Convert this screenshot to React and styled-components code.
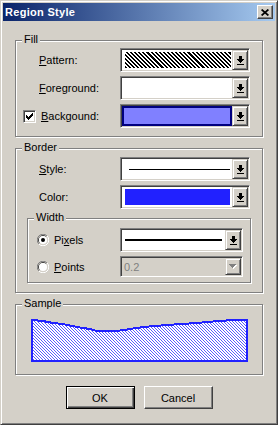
import React from 'react'
import styled, { createGlobalStyle } from 'styled-components'

const FACE = '#d4d0c8'

export const App = () => (
  <>
    <GlobalStyle />
    <Window>
      <TitleBar>
        <Title>Region Style</Title>
        <CloseButton aria-label="Close">
          <svg width="8" height="7" viewBox="0 0 8 7">
            <path d="M0.6 0.5 L7.4 6.5 M7.4 0.5 L0.6 6.5" stroke="#000" strokeWidth="1.7" />
          </svg>
        </CloseButton>
      </TitleBar>

      <Body>
        <Group $pad="7px 0 8px">
          <Caption>Fill</Caption>
          <Stack>
            <Row $col={104}>
              <Label $indent={23}><span><Key>P</Key>attern:</span></Label>
              <Combo $w={130}>
                <Preview $pad="2px 1px 2px 3px"><Hatch /></Preview>
                <DropButton><DropArrow /></DropButton>
              </Combo>
            </Row>
            <Row $col={104}>
              <Label $indent={23}><span><Key>F</Key>oreground:</span></Label>
              <Combo $w={130}>
                <Preview />
                <DropButton><DropArrow /></DropButton>
              </Combo>
            </Row>
            <Row $col={104}>
              <Label $indent={7}>
                <Checkbox checked />
                <span><Key>B</Key>ackgound:</span>
              </Label>
              <Combo $w={130}>
                <Preview><Swatch $color="#8080ff" $focus /></Preview>
                <DropButton><DropArrow /></DropButton>
              </Combo>
            </Row>
          </Stack>
        </Group>

        <Group $pad="8px 0 9px" $gap={11}>
          <Caption>Border</Caption>
          <Stack>
            <Row $col={104}>
              <Label $indent={23}><span><Key>S</Key>tyle:</span></Label>
              <Combo $w={130}>
                <Preview $pad="0 2px 0 7px"><Line $weight={1} /></Preview>
                <DropButton><DropArrow /></DropButton>
              </Combo>
            </Row>
            <Row $col={104}>
              <Label $indent={23}><span>Color:</span></Label>
              <Combo $w={130}>
                <Preview $pad="2px 2px 2px 3px"><Swatch $color="#2121ff" /></Preview>
                <DropButton><DropArrow /></DropButton>
              </Combo>
            </Row>
          </Stack>

          <Group $pad="9px 0 5px" $gap={9} $inset={11}>
            <Caption>Width</Caption>
            <Stack>
              <Row $col={92}>
                <Label $indent={9}>
                  <Radio checked />
                  <span>Pi<Key>x</Key>els</span>
                </Label>
                <Combo $w={123}>
                  <Preview $pad="0 3px 0 3px"><Line $weight={2} /></Preview>
                  <DropButton><DropArrow /></DropButton>
                </Combo>
              </Row>
              <Row $col={92}>
                <Label $indent={9}>
                  <Radio />
                  <span><Key>P</Key>oints</span>
                </Label>
                <Combo $w={123} $h={21} $disabled>
                  <Preview $pad="0 0 0 2px"><DisabledText>0.2</DisabledText></Preview>
                  <DropButton><DisabledArrow /></DropButton>
                </Combo>
              </Row>
            </Stack>
          </Group>
        </Group>

        <Group $pad="13px 0 11px" $gap={11}>
          <Caption>Sample</Caption>
          <SampleArea>
            <Sample />
          </SampleArea>
        </Group>

        <Buttons>
          <PushButton $default>OK</PushButton>
          <PushButton>Cancel</PushButton>
        </Buttons>
      </Body>
    </Window>
  </>
)

export default App


const DropArrow = () => (
  <svg width="7" height="9" viewBox="0 0 7 9" shapeRendering="crispEdges">
    <rect x="2" y="0" width="3" height="3" fill="#000" />
    <rect x="0" y="3" width="7" height="1" fill="#000" />
    <rect x="1" y="4" width="5" height="1" fill="#000" />
    <rect x="2" y="5" width="3" height="1" fill="#000" />
    <rect x="3" y="6" width="1" height="1" fill="#000" />
    <rect x="0" y="8" width="7" height="1" fill="#000" />
  </svg>
)

const DisabledArrow = () => (
  <svg width="8" height="5" viewBox="0 0 8 5" shapeRendering="crispEdges">
    <path d="M1 1 H8 V2 H7 V3 H6 V4 H5 V5 H4 V4 H3 V3 H2 V2 H1 Z" fill="#fff" />
    <path d="M0 0 H7 V1 H6 V2 H5 V3 H4 V4 H3 V3 H2 V2 H1 V1 H0 Z" fill="#808080" />
  </svg>
)

const Checkbox = ({ checked }) => (
  <CheckBox>
    {checked && (
      <svg width="9" height="9" viewBox="0 0 9 9" shapeRendering="crispEdges">
        <path d="M1 3 H2 V4 H3 V5 H4 V4 H5 V3 H6 V2 H7 V1 H8 V4 H7 V5 H6 V6 H5 V7 H4 V8 H3 V7 H2 V6 H1 Z" fill="#000" />
      </svg>
    )}
  </CheckBox>
)

const Radio = ({ checked }) => (
  <svg width="12" height="12" viewBox="0 0 12 12">
    <path d="M1.9 10.1 A5.5 5.5 0 0 1 10.1 1.9" fill="none" stroke="#808080" />
    <path d="M10.1 1.9 A5.5 5.5 0 0 1 1.9 10.1" fill="none" stroke="#fff" />
    <path d="M2.8 9.2 A4.5 4.5 0 0 1 9.2 2.8" fill="none" stroke="#404040" />
    <path d="M9.2 2.8 A4.5 4.5 0 0 1 2.8 9.2" fill="none" stroke={FACE} />
    <circle cx="6" cy="6" r="4" fill="#fff" />
    {checked && <circle cx="6" cy="6" r="2" fill="#000" />}
  </svg>
)

// top edge of the sample polygon (local coords, y = top pixel row)
const SAMPLE_TOP = [
  [0, 1], [12, 2], [22, 4], [32, 5], [41, 7], [52, 9], [59, 10], [66, 12],
  [86, 12], [99, 10], [112, 8], [136, 6], [151, 5], [166, 4], [176, 3], [202, 1], [216, 1],
]

const Sample = () => {
  const w = 217
  const h = 45
  const top = SAMPLE_TOP.map(([x, y]) => `${Math.min(Math.max(x, 1), w - 1)},${y + 1}`)
  const points = [`1,${h - 2}`, ...top, `${w - 1},${h - 2}`].join(' ')

  return (
    <svg width={w} height={h} viewBox={`0 0 ${w} ${h}`} shapeRendering="crispEdges">
      <defs>
        <pattern id="hatch" width="3" height="3" patternUnits="userSpaceOnUse">
          <rect width="3" height="3" fill="#fff" />
          <path d="M0 0 L3 3 M-1 2 L1 4 M2 -1 L4 1" stroke="#5a5aff" strokeWidth="1" />
        </pattern>
      </defs>
      <polygon points={points} fill="url(#hatch)" stroke="#2121ff" strokeWidth="2" />
    </svg>
  )
}

/**
 * --------------------------------------------------------
 * UI
 * --------------------------------------------------------
 */
const GlobalStyle = createGlobalStyle`
  body {
    margin: 0;
    background: ${FACE};
  }
`

const Window = styled.div`
  width: 278px;
  height: 425px;
  box-sizing: border-box;
  display: flex;
  flex-direction: column;
  padding: 2px;
  background: ${FACE};
  border: 1px solid;
  border-color: ${FACE} #404040 #404040 ${FACE};
  box-shadow: inset 1px 1px #fff, inset -1px -1px #808080;
  font: 11px "Liberation Sans", Arial, sans-serif;
  color: #000;
`

const TitleBar = styled.div`
  height: 18px;
  display: flex;
  align-items: center;
  justify-content: space-between;
  padding: 0 2px;
  background: linear-gradient(to right, #0a246a, #a6caf0);
`

const Title = styled.span`
  color: #fff;
  font-weight: bold;
  letter-spacing: 0.3px;
`

const CloseButton = styled.div`
  width: 16px;
  height: 14px;
  box-sizing: border-box;
  display: flex;
  align-items: center;
  justify-content: center;
  background: ${FACE};
  border: 1px solid;
  border-color: #fff #404040 #404040 #fff;
  box-shadow: inset -1px -1px #808080;
`

const Body = styled.div`
  display: flex;
  flex-direction: column;
  padding: 19px 12px 0;
`

const Group = styled.div`
  position: relative;
  margin: ${p => p.$gap || 0}px ${p => p.$inset || 0}px 0;
  padding: ${p => p.$pad};
  border: 1px solid #808080;
  box-shadow: inset 1px 1px #fff, 1px 1px #fff;
`

const Caption = styled.span`
  position: absolute;
  top: -8px;
  left: 6px;
  padding: 0 2px;
  line-height: 13px;
  background: ${FACE};
`

const Stack = styled.div`
  display: flex;
  flex-direction: column;
  gap: 4px;
`

const Row = styled.div`
  display: grid;
  grid-template-columns: ${p => p.$col}px auto;
  align-items: center;
`

const Label = styled.div`
  display: flex;
  align-items: center;
  gap: 5px;
  padding-left: ${p => p.$indent}px;
  white-space: nowrap;
`

const Key = styled.span`
  text-decoration: underline;
`

const CheckBox = styled.div`
  width: 13px;
  height: 13px;
  box-sizing: border-box;
  display: flex;
  align-items: center;
  justify-content: center;
  background: #fff;
  border: 1px solid;
  border-color: #808080 #fff #fff #808080;
  box-shadow: inset 1px 1px #404040, inset -1px -1px ${FACE};
`

const Combo = styled.div`
  width: ${p => p.$w}px;
  height: ${p => p.$h || 24}px;
  box-sizing: border-box;
  display: flex;
  padding: 1px;
  background: ${p => (p.$disabled ? FACE : '#fff')};
  border: 1px solid;
  border-color: #808080 #fff #fff #808080;
  box-shadow: inset 1px 1px #404040, inset -1px -1px ${FACE};
`

const Preview = styled.div`
  flex: 1;
  display: flex;
  align-items: center;
  padding: ${p => p.$pad || 0};
`

const Hatch = styled.div`
  align-self: stretch;
  flex: 1;
  background: repeating-linear-gradient(45deg, #000 0 1.5px, #fff 1.5px 2.9px);
`

const Swatch = styled.div`
  align-self: stretch;
  flex: 1;
  box-sizing: border-box;
  background: ${p => p.$color};
  border: ${p => (p.$focus ? '2px solid #000080' : 'none')};
`

const Line = styled.div`
  flex: 1;
  height: ${p => p.$weight}px;
  background: #000;
`

const DisabledText = styled.span`
  color: #808080;
`

const DropButton = styled.div`
  width: 16px;
  box-sizing: border-box;
  display: flex;
  align-items: center;
  justify-content: center;
  background: ${FACE};
  border: 1px solid;
  border-color: ${FACE} #404040 #404040 ${FACE};
  box-shadow: inset 1px 1px #fff, inset -1px -1px #808080;
`

const SampleArea = styled.div`
  display: flex;
  padding-left: 15px;
`

const Buttons = styled.div`
  display: flex;
  justify-content: center;
  gap: 9px;
  margin-top: 11px;
`

const PushButton = styled.div`
  width: 69px;
  height: 23px;
  box-sizing: border-box;
  display: flex;
  align-items: center;
  justify-content: center;
  background: ${FACE};
  border: 1px solid;
  border-color: ${p => (p.$default ? '#000' : '#fff #404040 #404040 #fff')};
  box-shadow: ${p => (p.$default
    ? 'inset 1px 1px #fff, inset -1px -1px #404040, inset -2px -2px #808080'
    : 'inset -1px -1px #808080')};
`
